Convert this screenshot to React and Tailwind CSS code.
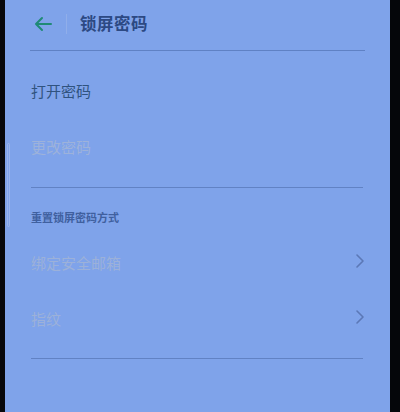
export default function App() {
  const font = { fontFamily: '"Noto Sans CJK SC", "Noto Sans", sans-serif' };
  const Chevron = () => (
    <svg width="10" height="16" viewBox="0 0 10 16" fill="none">
      <path d="M2 2 L8 8 L2 14" stroke="#5b78b6" strokeWidth="1.6" strokeLinecap="round" strokeLinejoin="round" />
    </svg>
  );
  return (
    <div className="w-[400px] h-[412px] flex bg-[#0b0d14] overflow-hidden" style={font}>
      <div className="w-[5px] shrink-0 bg-[#07080c]" />
      <div className="flex-1 bg-[#7fa3ea] flex flex-col relative">
        <div className="absolute left-[2px] top-[143px] w-[3px] h-[84px] rounded-full border border-[#a9c0f0] opacity-60" />
        <div className="h-[51px] mx-[25px] border-b border-[#5f81c4] flex items-center">
          <svg width="20" height="16" viewBox="0 0 20 16" fill="none" className="ml-[3px] mt-[-2px]">
            <path d="M18 8 H3 M9 2 L3 8 L9 14" stroke="#1f8a76" strokeWidth="2" strokeLinecap="round" strokeLinejoin="round" />
          </svg>
          <div className="w-px h-[20px] bg-[#90aeea] ml-[13px] mt-[-2px]" />
          <div className="ml-[13px] text-[16.5px] font-bold text-[#2c4983] mt-[-3px] tracking-[0.5px]">锁屏密码</div>
        </div>
        <div className="mx-[26px] mt-[12px]">
          <div className="h-[56px] flex items-center text-[15px] text-[#30537f]">打开密码</div>
          <div className="h-[56px] flex items-center text-[15px] text-[#9db2da]">更改密码</div>
        </div>
        <div className="mx-[26px] mr-[27px] mt-[12px] h-px bg-[#6182c4]" />
        <div className="mx-[26px] mt-[21px] text-[11px] font-bold leading-[16px] text-[#40609f]">重置锁屏密码方式</div>
        <div className="mx-[26px] mr-[25px] mt-[10px]">
          <div className="h-[56px] flex items-center justify-between text-[15px] text-[#9cb1d9] pt-[1px]">
            <span>绑定安全邮箱</span>
            <span className="mt-[-5px]"><Chevron /></span>
          </div>
          <div className="h-[56px] flex items-center justify-between text-[15px] text-[#9cb1d9]">
            <span className="mt-[1px]">指纹</span>
            <span className="mt-[-5px]"><Chevron /></span>
          </div>
        </div>
        <div className="mx-[26px] mr-[27px] mt-[11px] h-px bg-[#6182c4]" />
      </div>
      <div className="w-[10px] shrink-0 bg-[#05060a]" />
    </div>
  );
}
